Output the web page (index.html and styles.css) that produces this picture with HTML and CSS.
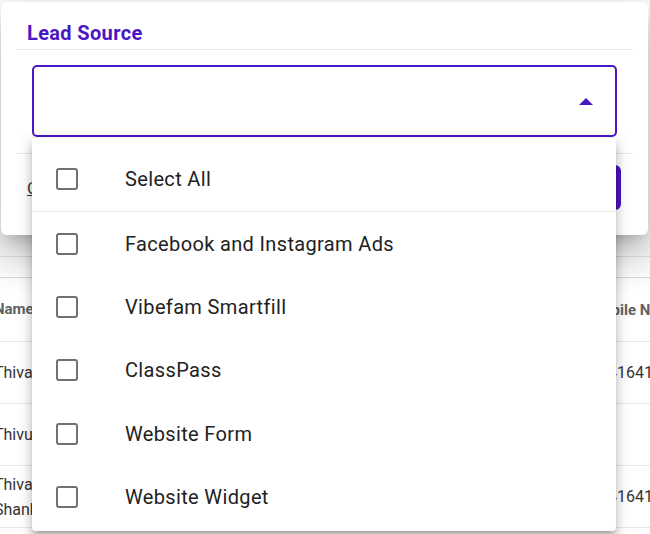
FILE: index.html
```html
<!DOCTYPE html>
<html lang="en">
<head>
  <meta charset="UTF-8">
  <meta name="viewport" content="width=device-width, initial-scale=1.0">
  <title>Leads</title>
<link rel="stylesheet" href="styles.css">
</head>
<body>
<div class="page">
  <div class="toolbar"></div>
  <div class="leads">
    <div class="row head">
      <span class="name">Name</span>
      <span></span>
      <span class="phone">Mobile Number</span>
    </div>
    <div class="row">
      <span class="name">Thiva</span>
      <span></span>
      <span class="phone">9841641230</span>
    </div>
    <div class="row">
      <span class="name">Thivu</span>
      <span></span>
      <span class="phone"></span>
    </div>
    <div class="row">
      <span class="name">Thiva Shankar</span>
      <span></span>
      <span class="phone">9841641870</span>
    </div>
  </div>
</div>

<div class="dialog">
  <div class="dialog-head">
    <h2>Lead Source</h2>
  </div>
  <div class="dialog-body">
    <div class="select">
      <svg class="caret" width="14" height="7" viewBox="0 0 14 7"><path d="M0 7L7 0l7 7z" fill="currentColor"/></svg>
    </div>
  </div>
  <div class="dialog-foot">
    <a href="#" class="cancel">Cancel</a>
    <button class="save">Save</button>
  </div>
</div>

<ul class="menu">
  <li class="all"><span class="check"></span>Select All</li>
  <li><span class="check"></span>Facebook and Instagram Ads</li>
  <li><span class="check"></span>Vibefam Smartfill</li>
  <li><span class="check"></span>ClassPass</li>
  <li><span class="check"></span>Website Form</li>
  <li><span class="check"></span>Website Widget</li>
</ul>
</body>
</html>
```

FILE: styles.css
```css
body {
  margin: 0;
  padding: 0;
  font-family: Roboto, "Liberation Sans", sans-serif;
  background: #fff;
  overflow: hidden;
}
.page {
  height: 534px;
}
.toolbar {
  height: 256px;
  border-bottom: 1px solid #e6e6e6;
}
.leads {
  margin-top: 20px;
  margin-left: -6px;
  border-top: 1px solid #d9d9d9;
}
.row {
  display: grid;
  grid-template-columns: 60px 536px 1fr;
  align-items: center;
  height: 61px;
  border-bottom: 1px solid #e8e8e8;
  font-size: 16px;
  color: #333;
  white-space: nowrap;
}
.row.head {
  height: 63px;
  font-size: 15px;
  font-weight: 700;
  color: #616161;
}
.row .name {
  white-space: normal;
  line-height: 25px;
}

/* dialog */
.dialog {
  position: absolute;
  left: 1px;
  top: 2px;
  width: 647px;
  height: 233px;
  background: #fff;
  border-radius: 6px;
  box-shadow: 0 11px 15px -7px rgba(0, 0, 0, 0.2), 0 24px 38px 3px rgba(0, 0, 0, 0.14), 0 9px 46px 8px rgba(0, 0, 0, 0.12);
}
.dialog-head {
  margin: 0 15px;
  padding: 19px 11px 4px;
  border-bottom: 1px solid #e8e8e8;
}
.dialog-head h2 {
  margin: 0;
  font-size: 20px;
  line-height: 24px;
  font-weight: 700;
  letter-spacing: 0.35px;
  color: #4a17c4;
}
.dialog-body {
  padding: 15px 31px 16px;
}
.select {
  display: flex;
  align-items: center;
  justify-content: flex-end;
  height: 68px;
  padding-right: 22px;
  border: 2px solid #4a17c4;
  border-radius: 5px;
  color: #4a17c4;
}
.dialog-foot {
  display: flex;
  align-items: center;
  justify-content: space-between;
  margin: 0 15px;
  padding: 11px 12px 0 11px;
  border-top: 1px solid #e8e8e8;
}
.cancel {
  font-size: 17px;
  color: #333;
}
.save {
  height: 45px;
  width: 120px;
  border: none;
  border-radius: 6px;
  background: #4a14c0;
  color: #fff;
  font-size: 16px;
}

/* dropdown */
.menu {
  position: absolute;
  left: 32px;
  top: 138px;
  width: 584px;
  margin: 0;
  padding: 9px 0 3px;
  list-style: none;
  background: #fff;
  border-radius: 0 0 4px 4px;
  box-shadow: 0 5px 5px -3px rgba(0, 0, 0, 0.2), 0 8px 10px 1px rgba(0, 0, 0, 0.14), 0 3px 14px 2px rgba(0, 0, 0, 0.12);
}
.menu li {
  display: flex;
  align-items: center;
  height: 63.3px;
  padding-left: 24px;
  font-size: 20px;
  letter-spacing: 0.35px;
  color: #222;
}
.menu li.all {
  height: 64px;
  border-bottom: 1px solid #e6e6e6;
}
.check {
  box-sizing: border-box;
  width: 22px;
  height: 22px;
  margin-right: 47px;
  border: 2px solid #717171;
  border-radius: 3px;
}
```
